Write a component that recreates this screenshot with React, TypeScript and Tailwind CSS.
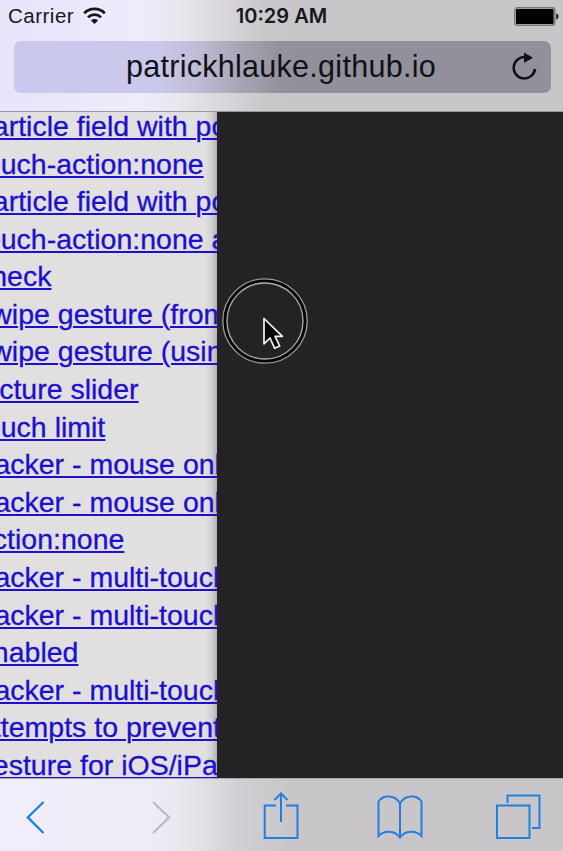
const links = [
  'particle field with pointer',
  'touch-action:none',
  'particle field with pointer',
  'touch-action:none and',
  'check',
  'swipe gesture (from',
  'swipe gesture (using',
  'picture slider',
  'touch limit',
  'tracker - mouse only',
  'tracker - mouse only',
  'action:none',
  'tracker - multi-touch',
  'tracker - multi-touch',
  'enabled',
  'tracker - multi-touch',
  'attempts to prevent',
  'gesture for iOS/iPad',
];

function StatusBar() {
  return (
    <div className="grid h-8 grid-cols-[1fr_auto_1fr] items-center px-1 text-[20px] leading-8 text-[#17161c]">
      <div className="ml-1 flex items-center gap-[9px]">
        <span className="text-[20.5px] tracking-[0.5px]">Carrier</span>
        <svg className="-mt-px" width="23" height="18" viewBox="0 0 23 18" fill="none" stroke="#17161c" strokeWidth="2.7">
          <path d="M1.2 6.2a14.6 14.6 0 0 1 20.6 0" />
          <path d="M5 10.4a9.2 9.2 0 0 1 13 0" />
          <path d="M11.5 17 7.9 13.5a5.1 5.1 0 0 1 7.2 0Z" fill="#17161c" stroke="none" />
        </svg>
      </div>
      <span className="whitespace-nowrap font-['Inter','Liberation_Sans',sans-serif] text-[20px] font-semibold">10:29 AM</span>
      <svg className="justify-self-end" width="45" height="19" viewBox="0 0 45 19">
        <rect x="0.8" y="0.8" width="40" height="17.4" rx="2.5" fill="none" stroke="#77767a" strokeWidth="1.4" />
        <rect x="2" y="2" width="37.6" height="15" rx="1" fill="#000" />
        <path d="M42.2 6.5q2.3.2 2.3 3t-2.3 3Z" fill="#222" />
      </svg>
    </div>
  );
}

export default function App() {
  return (
    <main className="relative flex h-[851px] w-[563px] flex-col overflow-hidden bg-[#242225] font-['Liberation_Sans',Arial,sans-serif]">
      <header className="h-28 shrink-0 border-b border-[#99979c] bg-[linear-gradient(90deg,#e7e4fd_0px,#eeecfb_140px,#e8e6ee_180px,#dad8dd_220px,#cbc9cc_260px,#c8c6c9_290px,#c8c6c9_563px)]">
        <StatusBar />
        <div className="ml-[14px] mr-3 mt-[9px] flex h-[52px] items-center rounded-[7px] bg-[linear-gradient(90deg,#cac8ee_0px,#cac8ea_145px,#bebcd6_185px,#a5a3b1_230px,#94929c_265px,#92919b_290px,#92919b_537px)]">
          <span className="ml-[112px] w-[312px] whitespace-nowrap text-[30.5px] tracking-[0.28px] text-[#111018]">patrickhlauke.github.io</span>
          <svg className="ml-[72px] shrink-0" width="28" height="30" viewBox="0 0 28 30" fill="none">
            <path d="M15.5 5.1A10.7 10.7 0 1 0 25 17" stroke="#111015" strokeWidth="2.5" />
            <path d="m14 .5 9 5.3-9 5.2Z" fill="#111015" />
          </svg>
        </div>
      </header>

      <div className="flex min-h-0 flex-1 overflow-hidden">
        <section className="w-[217px] overflow-hidden bg-[linear-gradient(90deg,#e1dfe0_0px,#e1dfe0_205px,#d5d3d5_211px,#b4b2b4_217px)]">
          <ul className="-ml-[23px] -mt-[4px] w-[400px] text-[28.5px] leading-[37.58px] text-[#1c10cc] [-webkit-text-stroke:0.3px_#1c10cc]">
            {links.map((label, i) => (
              <li key={i} className="h-[37.58px] whitespace-nowrap">
                <a className="underline decoration-[1.8px] underline-offset-[2px]">{label}</a>
              </li>
            ))}
          </ul>
        </section>
        <section className="flex-1 bg-[#242225]" />
      </div>

      <nav className="h-[73px] shrink-0 border-t border-[#aaa8ac] bg-[linear-gradient(90deg,#f0eefa_0px,#eeecf6_150px,#e6e4eb_195px,#d2d0d4_235px,#c8c6c9_290px,#c8c6c9_563px)]">
        <svg width="563" height="72" viewBox="0 779 563 72" fill="none" stroke="#207fdf" strokeWidth="2">
          <path d="m43.5 802-15.7 15.4L43.5 833" stroke="#197fe7" strokeWidth="2.2" />
          <path d="m153 802 16.2 15.4L153 833" stroke="#bbb9c1" strokeWidth="2.2" />
          <path d="M276 805.5H264.7V838h32.8v-32.5H286M281 822v-28.5M274.5 800l6.5-6.5 6.5 6.5" />
          <path d="M400 803.5c-5-8.8-16.5-9-21.5-2V836c5-5.8 16.5-6.3 21.5 1.5 5-7.8 16.5-7.3 21.5-1.5v-34.5c-5-7-16.5-6.8-21.5 2Zm0 0v34" />
          <path d="M497 805.5h32.5V838H497Z M507.5 803v-7.5h32V828H532" />
        </svg>
      </nav>

      <svg className="absolute left-[221px] top-[277px]" width="88" height="88" viewBox="0 0 88 88" fill="none">
        <circle cx="44" cy="44" r="40.3" stroke="#050505" strokeWidth="3" />
        <circle cx="44" cy="44" r="42.2" stroke="#9b999c" strokeWidth="1.3" />
        <circle cx="44" cy="44" r="38" stroke="#aaa8aa" strokeWidth="1.3" />
        <path d="M43 41.5v25.3l6-5.8 4.7 10.3 5-2.3-4.6-9.7h7.3Z" fill="#080808" stroke="#f3f3f3" strokeWidth="1.7" strokeLinejoin="round" />
      </svg>
    </main>
  );
}
